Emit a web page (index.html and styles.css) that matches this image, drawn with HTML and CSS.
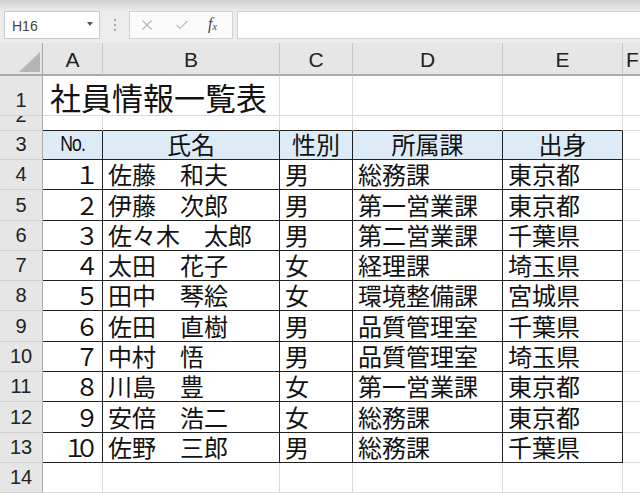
FILE: index.html
```html
<!DOCTYPE html>
<html lang="ja">
<head>
<meta charset="utf-8">
<link rel="stylesheet" href="styles.css">
</head>
<body>
<div class="app">
  <div class="toolbar">
    <div class="namebox"><span class="ref">H16</span><span class="caret"></span></div>
    <div class="grip"><i></i><i></i><i></i></div>
    <div class="fbtns">
      <svg class="ic" width="12" height="12" viewBox="0 0 12 12"><path d="M1.5 1.5 L10.5 10.5 M10.5 1.5 L1.5 10.5" stroke="#b9b9b9" stroke-width="1.3" fill="none"/></svg>
      <svg class="ic" width="14" height="12" viewBox="0 0 14 12"><path d="M1.5 6 L5 9.5 L12.5 2" stroke="#c4c4c4" stroke-width="1.5" fill="none"/></svg>
      <span class="fx"><i>f</i><sub>x</sub></span>
    </div>
    <div class="fbar"></div>
  </div>
  <div class="sheet">
    <!-- column header -->
    <div class="c hd corner"><span class="tri"></span></div>
    <div class="c hd">A</div>
    <div class="c hd">B</div>
    <div class="c hd">C</div>
    <div class="c hd">D</div>
    <div class="c hd">E</div>
    <div class="c hd last">F</div>

    <!-- row 1 -->
    <div class="c rh">1</div>
    <div class="c title span2">社員情報一覧表</div>
    <div class="c"></div>
    <div class="c"></div>
    <div class="c"></div>
    <div class="c"></div>

    <!-- row 2 -->
    <div class="c rh">2</div>
    <div class="c tb"></div>
    <div class="c tb"></div>
    <div class="c tb"></div>
    <div class="c tb"></div>
    <div class="c tb"></div>
    <div class="c"></div>

    <!-- row 3 -->
    <div class="c rh">3</div>
    <div class="c t th"><span class="no">No.</span></div>
    <div class="c t th">氏名</div>
    <div class="c t th">性別</div>
    <div class="c t th">所属課</div>
    <div class="c t th">出身</div>
    <div class="c"></div>

    <div class="c rh">4</div>
    <div class="c t num">１</div>
    <div class="c t">佐藤　和夫</div>
    <div class="c t">男</div>
    <div class="c t">総務課</div>
    <div class="c t">東京都</div>
    <div class="c"></div>

    <div class="c rh">5</div>
    <div class="c t num">２</div>
    <div class="c t">伊藤　次郎</div>
    <div class="c t">男</div>
    <div class="c t">第一営業課</div>
    <div class="c t">東京都</div>
    <div class="c"></div>

    <div class="c rh">6</div>
    <div class="c t num">３</div>
    <div class="c t">佐々木　太郎</div>
    <div class="c t">男</div>
    <div class="c t">第二営業課</div>
    <div class="c t">千葉県</div>
    <div class="c"></div>

    <div class="c rh">7</div>
    <div class="c t num">４</div>
    <div class="c t">太田　花子</div>
    <div class="c t">女</div>
    <div class="c t">経理課</div>
    <div class="c t">埼玉県</div>
    <div class="c"></div>

    <div class="c rh">8</div>
    <div class="c t num">５</div>
    <div class="c t">田中　琴絵</div>
    <div class="c t">女</div>
    <div class="c t">環境整備課</div>
    <div class="c t">宮城県</div>
    <div class="c"></div>

    <div class="c rh">9</div>
    <div class="c t num">６</div>
    <div class="c t">佐田　直樹</div>
    <div class="c t">男</div>
    <div class="c t">品質管理室</div>
    <div class="c t">千葉県</div>
    <div class="c"></div>

    <div class="c rh">10</div>
    <div class="c t num">７</div>
    <div class="c t">中村　悟</div>
    <div class="c t">男</div>
    <div class="c t">品質管理室</div>
    <div class="c t">埼玉県</div>
    <div class="c"></div>

    <div class="c rh">11</div>
    <div class="c t num">８</div>
    <div class="c t">川島　豊</div>
    <div class="c t">女</div>
    <div class="c t">第一営業課</div>
    <div class="c t">東京都</div>
    <div class="c"></div>

    <div class="c rh">12</div>
    <div class="c t num">９</div>
    <div class="c t">安倍　浩二</div>
    <div class="c t">女</div>
    <div class="c t">総務課</div>
    <div class="c t">東京都</div>
    <div class="c"></div>

    <div class="c rh">13</div>
    <div class="c t num"><span class="d1">１</span>０</div>
    <div class="c t">佐野　三郎</div>
    <div class="c t">男</div>
    <div class="c t">総務課</div>
    <div class="c t">千葉県</div>
    <div class="c"></div>

    <div class="c rh">14</div>
    <div class="c"></div>
    <div class="c"></div>
    <div class="c"></div>
    <div class="c"></div>
    <div class="c"></div>
    <div class="c"></div>
  </div>
</div>
</body>
</html>
```

FILE: styles.css
```css
html, body {
  margin: 0;
  padding: 0;
  background: #ffffff;
}
.app {
  width: 640px;
  height: 493px;
  overflow: hidden;
  font-family: "Noto Sans CJK JP", sans-serif;
  color: #111;
}

/* ---------- toolbar ---------- */
.toolbar {
  height: 43px;
  box-sizing: border-box;
  padding: 11px 0 4px 4px;
  display: flex;
  align-items: stretch;
  background: linear-gradient(#cfcfcf 0, #e3e3e3 8px, #ececec 11px, #ececec 100%);
}
.namebox {
  width: 96px;
  box-sizing: border-box;
  background: #fff;
  border: 1px solid #c9c9c9;
  display: flex;
  align-items: center;
  justify-content: space-between;
  padding: 0 6px 0 7px;
}
.ref {
  font: 14px "Liberation Sans", Arial, sans-serif;
  color: #444;
  padding-top: 2px;
}
.caret {
  width: 0;
  height: 0;
  border-left: 3.5px solid transparent;
  border-right: 3.5px solid transparent;
  border-top: 4px solid #555;
  margin-top: -2px;
}
.grip {
  width: 29px;
  display: flex;
  flex-direction: column;
  align-items: center;
  justify-content: center;
  gap: 3px;
}
.grip i {
  width: 2px;
  height: 2px;
  background: #a8a8a8;
  display: block;
}
.fbtns {
  width: 104px;
  box-sizing: border-box;
  background: #fbfbfb;
  border: 1px solid #d2d2d2;
  display: flex;
  align-items: center;
  padding-left: 11px;
}
.fbtns .ic:nth-child(1) { margin-right: 22px; }
.fbtns .ic:nth-child(2) { margin-right: 19px; }
.fx {
  font-family: "Liberation Serif", serif;
  color: #444;
  font-size: 16px;
  line-height: 1;
  margin-top: -2px;
}
.fx i { font-style: italic; }
.fx sub { font-size: 10px; font-style: italic; vertical-align: -1px; }
.fbar {
  flex: 1;
  margin-left: 4px;
  background: #fff;
  border: 1px solid #d0d0d0;
  border-right: none;
}

/* ---------- sheet ---------- */
.sheet {
  display: grid;
  grid-template-columns: 43px 60px 177px 73px 150px 120px 40px;
  grid-template-rows: 33px 40px 15px 29px repeat(10, 30.3px) 30px;
}
.c {
  box-sizing: border-box;
  border-right: 1px solid #dadada;
  border-bottom: 1px solid #dadada;
  display: flex;
  align-items: flex-end;
  overflow: hidden;
  white-space: nowrap;
  padding: 0 5px 3px 5px;
  font-size: 24px;
  line-height: 24px;
  min-width: 0;
}
.hd {
  background: #e6e6e6;
  border-right: 1px solid #c8c8c8;
  border-bottom: 2px solid #ababab;
  justify-content: center;
  font: 21px/26px "Liberation Sans", Arial, sans-serif;
  color: #222;
  padding: 0 0 1px 0;
}
.hd.last { justify-content: flex-start; padding-left: 3px; border-right: none; }
.corner {
  position: relative;
  border-right: 1px solid #ababab;
}
.tri {
  position: absolute;
  right: 2px;
  bottom: 2px;
  width: 0;
  height: 0;
  border-left: 21px solid transparent;
  border-bottom: 20px solid #b5b5b5;
}
.rh {
  background: #e6e6e6;
  border-right: 1px solid #ababab;
  border-bottom: 1px solid #d0d0d0;
  justify-content: center;
  font: 20px/30px "Liberation Sans", Arial, sans-serif;
  color: #222;
  padding: 0;
}
.title {
  font-size: 31px;
  line-height: 31px;
  padding: 0 0 3px 7px;
}
.span2 { grid-column: span 2; }
.tb { border-bottom-color: #222; }
.t {
  border-right: 1px solid #222;
  border-bottom: 1px solid #222;
}
.th {
  background: #ddebf7;
  justify-content: center;
}
.num {
  justify-content: flex-end;
  padding-right: 3px;
}
.d1 {
  margin-right: -12px;
}
.no {
  font-family: "Liberation Sans Narrow", "Liberation Sans", sans-serif;
  font-size: 22px;
  letter-spacing: -1px;
  transform: scaleX(0.8);
  display: inline-block;
}
```
